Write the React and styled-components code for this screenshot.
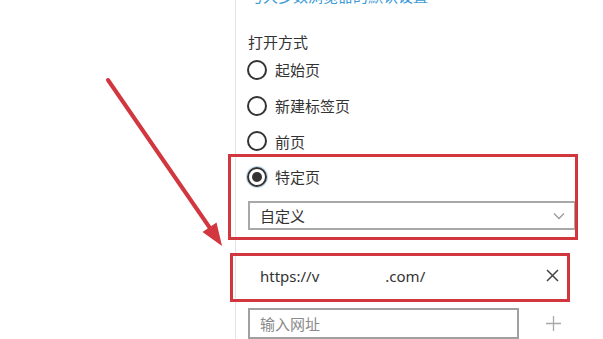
import React from "react";
import styled, { createGlobalStyle } from "styled-components";

const Global = createGlobalStyle`
  html, body { margin: 0; padding: 0; background: #ffffff; }
  body { font-family: "Noto Sans", "Noto Sans CJK SC", sans-serif; }
`;

const Screen = styled.div`
  position: relative;
  width: 603px;
  height: 339px;
  overflow: hidden;
  display: flex;
  background: #ffffff;
`;

const LeftPane = styled.div`
  width: 235px;
  flex-shrink: 0;
`;

const Panel = styled.div`
  flex: 1;
  display: flex;
  flex-direction: column;
  border-left: 1px solid #e4e4e4;
  padding-left: 12px;
  color: #333333;
  font-size: 15px;
`;

const CutText = styled.div`
  margin-top: -14px;
  line-height: 20px;
  color: #3d9bd6;
  white-space: nowrap;
`;

const Heading = styled.div`
  margin-top: 26px;
  line-height: 20px;
  height: 20px;
`;

const RadioRow = styled.label`
  display: flex;
  align-items: center;
  gap: 8px;
  height: 36px;
  margin-left: -1px;
`;

const Circle = styled.span`
  box-sizing: border-box;
  width: 20px;
  height: 20px;
  border-radius: 50%;
  border: 2px solid #333333;
  display: flex;
  align-items: center;
  justify-content: center;
  box-shadow: ${(p) => (p.$checked ? "0 0 0 1px rgba(60,150,215,0.35)" : "none")};
  &::after {
    content: "";
    display: ${(p) => (p.$checked ? "block" : "none")};
    width: 10px;
    height: 10px;
    border-radius: 50%;
    background: #333333;
  }
`;

const Select = styled.div`
  box-sizing: border-box;
  margin-top: 6px;
  width: 328px;
  height: 30px;
  border: 2px solid #a8a8a8;
  display: flex;
  align-items: center;
  justify-content: space-between;
  padding: 0 9px 0 10px;
`;

const UrlRow = styled.div`
  box-sizing: border-box;
  margin-top: 21px;
  width: 328px;
  height: 49px;
  display: flex;
  align-items: center;
  padding: 0 17px 0 12px;
`;

const UrlText = styled.span`
  white-space: nowrap;
`;

const UrlTail = styled.span`
  margin-left: 66px;
  white-space: nowrap;
  flex: 1;
`;

const AddRow = styled.div`
  margin-top: 8px;
  display: flex;
  align-items: center;
`;

const Input = styled.div`
  box-sizing: border-box;
  width: 271px;
  height: 31px;
  border: 2px solid #a0a0a0;
  padding-left: 10px;
  display: flex;
  align-items: center;
  color: #8a8a8a;
`;

const AddButton = styled.span`
  margin-left: 27px;
  display: flex;
  align-items: center;
`;

const Highlight = styled.div`
  position: absolute;
  box-sizing: border-box;
  border: 3px solid #d2363f;
  pointer-events: none;
`;

const ArrowLayer = styled.svg`
  position: absolute;
  left: 0;
  top: 0;
  pointer-events: none;
`;

const Chevron = () => (
  <svg width="12" height="8" viewBox="0 0 12 8">
    <polyline points="1,1.5 6,6.5 11,1.5" fill="none" stroke="#9a9a9a" strokeWidth="1.3" />
  </svg>
);

const Cross = () => (
  <svg width="13" height="13" viewBox="0 0 13 13">
    <path d="M1 1 L12 12 M12 1 L1 12" stroke="#444" strokeWidth="1.5" fill="none" />
  </svg>
);

const Plus = () => (
  <svg width="15" height="15" viewBox="0 0 15 15">
    <path d="M7.5 0 V15 M0 7.5 H15" stroke="#a8a8a8" strokeWidth="1.3" fill="none" />
  </svg>
);

const options = [
  { label: "起始页", checked: false },
  { label: "新建标签页", checked: false },
  { label: "前页", checked: false },
];

export default function App() {
  return (
    <>
      <Global />
      <Screen>
        <LeftPane />
        <Panel>
          <CutText>与大多数浏览器的默认设置</CutText>
          <Heading>打开方式</Heading>
          {options.map((o) => (
            <RadioRow key={o.label}>
              <Circle $checked={o.checked} />
              <span>{o.label}</span>
            </RadioRow>
          ))}
          <RadioRow>
            <Circle $checked />
            <span>特定页</span>
          </RadioRow>
          <Select>
            <span>自定义</span>
            <Chevron />
          </Select>
          <UrlRow>
            <UrlText>https://v</UrlText>
            <UrlTail>.com/</UrlTail>
            <Cross />
          </UrlRow>
          <AddRow>
            <Input>输入网址</Input>
            <AddButton>
              <Plus />
            </AddButton>
          </AddRow>
        </Panel>
        <Highlight style={{ left: 228, top: 154, width: 350, height: 86 }} />
        <Highlight style={{ left: 230, top: 253, width: 340, height: 49 }} />
        <ArrowLayer width="603" height="339" viewBox="0 0 603 339">
          <line x1="108" y1="80" x2="212" y2="231" stroke="#d2363f" strokeWidth="4" strokeLinecap="round" />
          <polygon points="222,246 202.5,232 216.5,222.5" fill="#d2363f" />
        </ArrowLayer>
      </Screen>
    </>
  );
}
